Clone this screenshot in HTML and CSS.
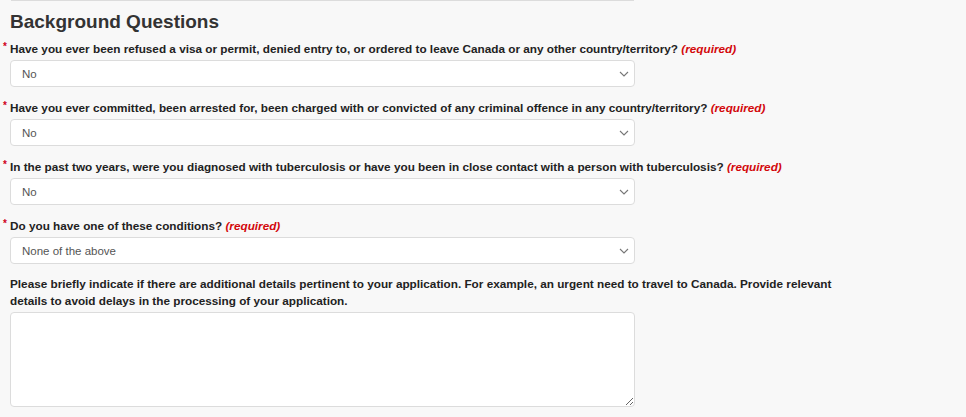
FILE: index.html
```html
<!DOCTYPE html>
<html>
<head>
<meta charset="utf-8">
<link rel="stylesheet" href="styles.css">
</head>
<body>
<div class="page">
  <div class="top-rule"></div>
  <h2 class="heading">Background Questions</h2>
  <div class="field">
    <label class="label req">Have you ever been refused a visa or permit, denied entry to, or ordered to leave Canada or any other country/territory? <em class="required">(required)</em></label>
    <div class="select"><span>No</span><svg class="chev" viewBox="0 0 10 6" width="10" height="6"><path d="M1 1l4 4 4-4" fill="none" stroke="#777" stroke-width="1.1"/></svg></div>
  </div>
  <div class="field">
    <label class="label req">Have you ever committed, been arrested for, been charged with or convicted of any criminal offence in any country/territory? <em class="required">(required)</em></label>
    <div class="select"><span>No</span><svg class="chev" viewBox="0 0 10 6" width="10" height="6"><path d="M1 1l4 4 4-4" fill="none" stroke="#777" stroke-width="1.1"/></svg></div>
  </div>
  <div class="field">
    <label class="label req">In the past two years, were you diagnosed with tuberculosis or have you been in close contact with a person with tuberculosis? <em class="required">(required)</em></label>
    <div class="select"><span>No</span><svg class="chev" viewBox="0 0 10 6" width="10" height="6"><path d="M1 1l4 4 4-4" fill="none" stroke="#777" stroke-width="1.1"/></svg></div>
  </div>
  <div class="field last">
    <label class="label req">Do you have one of these conditions? <em class="required">(required)</em></label>
    <div class="select"><span>None of the above</span><svg class="chev" viewBox="0 0 10 6" width="10" height="6"><path d="M1 1l4 4 4-4" fill="none" stroke="#777" stroke-width="1.1"/></svg></div>
  </div>
  <div class="field">
    <label class="label para">Please briefly indicate if there are additional details pertinent to your application. For example, an urgent need to travel to Canada. Provide relevant details to avoid delays in the processing of your application.</label>
    <textarea class="textarea"></textarea>
  </div>
</div>
</body>
</html>
```

FILE: styles.css
```css
html, body {
  margin: 0;
  padding: 0;
  background: #f8f8f8;
  font-family: "Liberation Sans", Arial, sans-serif;
  color: #333;
}
.page {
  padding: 0 0 0 10px;
  width: 625px;
}
.top-rule {
  height: 1px;
  background: #dcdcdc;
  margin: 0 1px;
}
.heading {
  font-size: 19px;
  font-weight: bold;
  margin: 10px 0 7px 0;
  line-height: 22px;
  color: #333;
}
.field {
  margin-bottom: 12px;
}
.field.last {
  margin-bottom: 11px;
}
.label {
  display: block;
  font-size: 11.75px;
  font-weight: bold;
  line-height: 17px;
  white-space: nowrap;
  position: relative;
  color: #222;
  margin-bottom: 3px;
}
.label.para {
  white-space: normal;
  width: 835px;
}
.req::before {
  content: "*";
  color: #d0021b;
  position: absolute;
  left: -7px;
  top: -2px;
  font-size: 10px;
}
.required {
  color: #d3080c;
  font-style: italic;
}
.select {
  height: 25px;
  border: 1px solid #dcdcdc;
  border-radius: 4px;
  background: #fff;
  display: flex;
  align-items: center;
  justify-content: space-between;
  padding: 0 5px 0 11px;
  font-size: 11.5px;
  color: #555;
}
.chev {
  display: block;
}
.textarea {
  display: block;
  box-sizing: border-box;
  width: 625px;
  height: 95px;
  border: 1px solid #dcdcdc;
  border-radius: 4px;
  background: #fff;
  margin-top: 1px;
  resize: vertical;
}
```
